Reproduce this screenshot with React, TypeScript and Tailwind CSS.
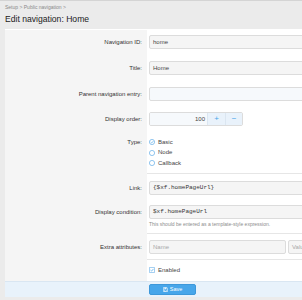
import React from "react";

function Label({ text, pt = "pt-[6px]" }: { text: string; pt?: string }) {
    return (
        <div className={`w-[142px] shrink-0 bg-[#f5f5f5] text-right pr-[5px] text-[6px] leading-[14px] text-[#333] ${pt}`}>
            {text}
        </div>
    );
}

function Input({ value, placeholder, mono, tint, className = "" }: { value?: string; placeholder?: string; mono?: boolean; tint?: boolean; className?: string }) {
    return (
        <div
            className={`h-[14px] border border-[#dcdcdc] rounded-[2px] px-[3px] text-[6px] leading-[12px] ${tint ? "bg-[#f6f9fc]" : "bg-[#f5f5f5]"} ${mono ? "font-['Liberation_Mono',monospace] text-[#333]" : "text-[#444]"} ${className}`}
        >
            {value ?? <span className="text-[#a8a8a8]">{placeholder}</span>}
        </div>
    );
}

function Radio({ checked, label }: { checked?: boolean; label: string }) {
    return (
        <div className="flex items-center gap-[3px] h-[10.5px] text-[6px] text-[#444]">
            <svg width="6" height="6" viewBox="0 0 12 12">
                <circle cx="6" cy="6" r="5.2" fill="#fff" stroke="#5aa9e6" strokeWidth="1.3" />
                {checked && <path d="M3.4 6.2 L5.3 8 L8.7 4.2" fill="none" stroke="#47a6ea" strokeWidth="1.3" />}
            </svg>
            {label}
        </div>
    );
}

function Sep() {
    return (
        <div className="flex h-px">
            <div className="w-[142px] shrink-0 bg-[#f5f5f5]" />
            <div className="flex-1 bg-[#e6e6e6]" />
        </div>
    );
}

export default function App() {
    return (
        <div className="w-[302px] h-[300px] overflow-hidden bg-[#ebebeb] border-t border-[#d4d4d4] font-['Liberation_Sans',Arial,sans-serif]">
            <div className="pl-[5px] h-[28px]">
                <div className="pt-[3px] text-[5px] leading-[6px] text-[#8a8a8a]">Setup &gt; Public navigation &gt;</div>
                <div className="mt-[3px] text-[8.6px] leading-[12px] text-[#222]">Edit navigation: Home</div>
            </div>

            <div className="ml-[5px] w-[330px] bg-white border-t border-white">
                <div className="flex">
                    <Label text="Navigation ID:" pt="pt-[5px]" />
                    <div className="flex-1 pl-[2px] pt-[5px] pb-[6px]">
                        <Input value="home" />
                    </div>
                </div>
                <div className="flex">
                    <Label text="Title:" />
                    <div className="flex-1 pl-[2px] py-[6px]">
                        <Input value="Home" />
                    </div>
                </div>
                <div className="flex">
                    <Label text="Parent navigation entry:" />
                    <div className="flex-1 pl-[2px] py-[6px]">
                        <Input value="" tint />
                    </div>
                </div>
                <div className="flex">
                    <Label text="Display order:" pt="pt-[5px]" />
                    <div className="flex-1 pl-[2px] pt-[5px] pb-[7px]">
                        <div className="flex w-[94px] h-[14px] border border-[#dcdcdc] rounded-[2px] overflow-hidden">
                            <div className="flex-1 bg-[#f6f9fc] text-right pr-[2px] text-[6px] leading-[12px] text-[#444]">100</div>
                            <div className="w-[18px] bg-[#e9f2fb] border-l border-[#dbe6f1] text-center text-[8px] leading-[12px] text-[#47a6ea]">+</div>
                            <div className="w-[17px] bg-[#e9f2fb] border-l border-[#dbe6f1] text-center text-[8px] leading-[12px] text-[#47a6ea]">−</div>
                        </div>
                    </div>
                </div>
                <div className="flex">
                    <div className="w-[142px] shrink-0 bg-[#f5f5f5] text-right pr-[5px] text-[6px] leading-[10.5px] text-[#333] pt-[4px]">Type:</div>
                    <div className="flex-1 pl-[2px] pt-[4px] pb-[4px]">
                        <Radio checked label="Basic" />
                        <Radio label="Node" />
                        <Radio label="Callback" />
                    </div>
                </div>
                <Sep />
                <div className="flex">
                    <Label text="Link:" pt="pt-[7px]" />
                    <div className="flex-1 pl-[2px] pt-[7px] pb-[5px]">
                        <Input value="{$xf.homePageUrl}" mono />
                    </div>
                </div>
                <div className="flex">
                    <Label text="Display condition:" pt="pt-[5px]" />
                    <div className="flex-1 pl-[2px] pt-[5px] pb-[5px]">
                        <Input value="$xf.homePageUrl" mono />
                        <div className="mt-[2px] text-[5px] leading-[7px] text-[#8c8c8c]">This should be entered as a template-style expression.</div>
                    </div>
                </div>
                <Sep />
                <div className="flex">
                    <Label text="Extra attributes:" />
                    <div className="flex-1 pl-[2px] pt-[6px] pb-[5px] flex gap-[2px]">
                        <Input placeholder="Name" className="w-[137px]" />
                        <Input placeholder="Value" className="flex-1" />
                    </div>
                </div>
                <Sep />
                <div className="flex">
                    <div className="w-[142px] shrink-0 bg-[#f5f5f5]" />
                    <div className="flex-1 pl-[2px] pt-[5px] pb-[5px] flex items-center gap-[3px] h-[21px] text-[6px] text-[#444]">
                        <svg width="6" height="6" viewBox="0 0 12 12">
                            <rect x="0.7" y="0.7" width="10.6" height="10.6" rx="1.5" fill="#fff" stroke="#5aa9e6" strokeWidth="1.3" />
                            <path d="M3 6.2 L5.1 8.2 L9 3.8" fill="none" stroke="#47a6ea" strokeWidth="1.4" />
                        </svg>
                        Enabled
                    </div>
                </div>
                <div className="flex bg-[#e8f2fb] border-t border-[#d9e6f2] h-[16px]">
                    <div className="w-[142px] shrink-0" />
                    <div className="pl-[2px] pt-[2px]">
                        <div className="w-[47px] h-[11px] bg-[#47a6ea] border border-[#3d98da] rounded-[2px] flex items-center justify-center gap-[2px] text-[5.5px] text-white">
                            <svg width="5" height="5" viewBox="0 0 12 12">
                                <path d="M1 1 H9 L11 3 V11 H1 Z" fill="none" stroke="#fff" strokeWidth="1.4" />
                                <rect x="3.3" y="1.5" width="5" height="3" fill="#fff" />
                                <rect x="3.3" y="7" width="5.4" height="3.4" fill="none" stroke="#fff" strokeWidth="1" />
                            </svg>
                            Save
                        </div>
                    </div>
                </div>
            </div>
        </div>
    );
}
